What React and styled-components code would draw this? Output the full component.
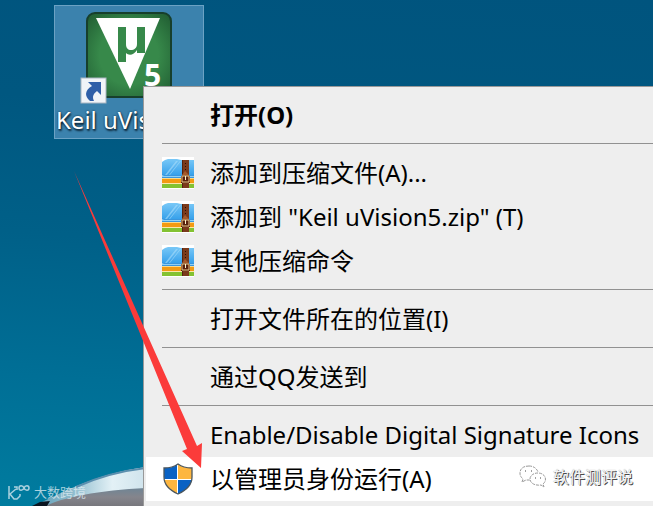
import React from "react";
import styled, { createGlobalStyle } from "styled-components";

const theme = {
  menuBg: "#eeeeee",
  menuBorder: "#999999",
  line: "#919191",
  arrow: "#fb3b3a",
};

const GlobalStyle = createGlobalStyle`
  * {
    box-sizing: border-box;
  }

  body {
    margin: 0;
    font-family: "Noto Sans", "Noto Sans CJK SC", sans-serif;
  }
`;

const Desktop = styled.main`
  position: relative;
  min-height: 100vh;
  overflow: hidden;
  background: linear-gradient(184deg, #00547e 0%, #005780 25%, #006088 50%, #006f96 76%, #007c9f 100%);
`;

const Wallpaper = styled.svg`
  position: absolute;
  left: 0;
  bottom: 0;
  width: 146px;
  height: 46px;
`;

const Shortcut = styled.button`
  position: absolute;
  left: 54px;
  top: 5px;
  width: 150px;
  padding: 6px 1px 2px;
  display: flex;
  flex-direction: column;
  align-items: center;
  border: 1px solid #6ba2c4;
  background-color: #3b82ad;
  font-family: inherit;

  svg {
    width: 98px;
    height: 92px;
  }
`;

const ShortcutName = styled.span`
  align-self: flex-start;
  font-size: 24px;
  line-height: 32px;
  white-space: nowrap;
  color: white;
  text-shadow: 1px 2px 2px #0b2436, 0 0 2px #0b2436;
`;

const Menu = styled.div`
  position: absolute;
  left: 143px;
  right: -4px;
  top: 86px;
  padding: 6px 2px;
  border: 1px solid ${theme.menuBorder};
  background-color: ${theme.menuBg};
`;

const MenuItem = styled.button`
  display: flex;
  align-items: center;
  gap: 16px;
  width: 100%;
  height: 44px;
  padding: 0 16px;
  border: none;
  background-color: ${({ $active }) => ($active ? "white" : "transparent")};
  color: black;
  font-family: inherit;
  font-size: 24px;
  font-weight: ${({ $bold }) => ($bold ? 700 : 400)};
  line-height: 32px;
  text-align: left;
  white-space: nowrap;
`;

const IconSlot = styled.span`
  flex: none;
  display: flex;
  width: 32px;
  height: 32px;
`;

const Separator = styled.hr`
  height: 1px;
  margin: 6px 0 7px 16px;
  border: none;
  background-color: ${theme.line};
`;

const Arrow = styled.svg`
  position: absolute;
  left: 72px;
  top: 168px;
  width: 134px;
  height: 302px;
  pointer-events: none;
`;

const AccountMark = styled.div`
  position: absolute;
  right: 20px;
  bottom: 17px;
  display: flex;
  align-items: center;
  gap: 6px;
  font-size: 16px;
  line-height: 24px;
  color: #f4f4f4;
  text-shadow: 1px 1px 0 #4a4a4a, 0 0 1px #999;
`;

const SiteMark = styled.div`
  position: absolute;
  left: 7px;
  bottom: 4px;
  display: flex;
  align-items: center;
  gap: 3px;
  font-size: 13px;
  line-height: 20px;
  color: rgba(225, 238, 244, 0.75);
`;

const KeilIcon = () => (
  <svg viewBox="0 0 98 92" aria-hidden="true">
    <defs>
      <radialGradient id="keil" cx="0.5" cy="0.5" r="0.7">
        <stop offset="0.5" stopColor="#37894a" />
        <stop offset="1" stopColor="#1f5a31" />
      </radialGradient>
    </defs>
    <rect x="7" y="1" width="84" height="84" rx="8" fill="url(#keil)" stroke="#173f2c" strokeWidth="2" />
    <path d="M16 6H80L50 77Z" fill="white" />
    <path d="M38 15h8v17c0 4 2 6 5 6s6-2 6-6V15h8v26h-8v-3c-3 5-8 6-11 3v9h-8z" fill="#37894a" />
    <text x="64" y="74" fill="white" fontSize="30" fontWeight="700" fontFamily="Open Sans">5</text>
    <rect x="1" y="66" width="25" height="25" fill="#f1f4f8" stroke="#aab6c2" />
    <path d="M8 70h13v13l-4-4c-4 3-5 6-3 10h-4c-6-5-5-11 2-15z" fill="#2f5fa8" />
  </svg>
);

const ArchiveIcon = () => (
  <svg viewBox="0 0 32 32" width="32" height="32" aria-hidden="true">
    <defs>
      <linearGradient id="folder" x1="0" y1="0" x2="0" y2="1">
        <stop offset="0" stopColor="#79c8f7" />
        <stop offset="1" stopColor="#2f9ce9" />
      </linearGradient>
    </defs>
    <path d="M0 0h32v32H0z" fill="white" />
    <path d="M0 26h32v5H0z" fill="#83c232" />
    <path d="M0 21h32v5H0z" fill="#f39a12" />
    <path d="M0 21h32v1H0z" fill="#fbd98a" />
    <path d="M0 26h32v1H0z" fill="#fbe6a8" />
    <path d="M0 5l3-2 3-1h9l4 1h13v17H2l-2-2z" fill="url(#folder)" />
    <path d="M0 17l2 1h30v3H0z" fill="#3a96dd" />
    <path d="M0 18l2 1h30v1H0z" fill="#8fd0f5" />
    <path d="M14 4h2L5 18H3zM18 4h1L8 18H7z" fill="#a9dcfa" opacity="0.6" />
    <path d="M20 3h7v28h-7z" fill="#7a3a1b" />
    <path d="M20 3h1v28h-1z" fill="#53230e" />
    <path d="M23 6h1v1h-1zM23 9h1v1h-1zM23 12h1v1h-1z" fill="#2a0f05" />
    <path d="M20 18l3-4 4 4z" fill="#a35a2c" />
    <path d="M19 19h9v7h-9z" fill="#57200c" />
    <path d="M20 19h7v6h-7z" fill="none" stroke="#e8c98a" />
    <path d="M23 19h1v4h-1z" fill="#fff3cc" />
  </svg>
);

const ShieldIcon = () => (
  <svg viewBox="0 0 32 32" width="32" height="32" aria-hidden="true">
    <clipPath id="shield">
      <path d="M2 5c6 0 10-1 14-4 4 3 8 4 14 4v9c0 8-5 13-14 17C7 27 2 22 2 14z" />
    </clipPath>
    <g clipPath="url(#shield)">
      <path d="M0 0h32v32H0z" fill="white" />
      <path d="M0 0h15v16H0zM16 17h16v15H16z" fill="#0a62c4" />
      <path d="M16 0h16v16H16zM0 17h15v15H0z" fill="#fdb640" />
    </g>
    <path
      d="M2 5c6 0 10-1 14-4 4 3 8 4 14 4v9c0 8-5 13-14 17C7 27 2 22 2 14z"
      fill="none"
      stroke="#4b565d"
      strokeWidth="1.300"
    />
  </svg>
);

const menuGroups = [
  [{ label: "打开(O)", bold: true }],
  [
    { label: "添加到压缩文件(A)...", Icon: ArchiveIcon },
    { label: '添加到 "Keil uVision5.zip" (T)', Icon: ArchiveIcon },
    { label: "其他压缩命令", Icon: ArchiveIcon },
  ],
  [{ label: "打开文件所在的位置(I)" }],
  [{ label: "通过QQ发送到" }],
  [
    { label: "Enable/Disable Digital Signature Icons" },
    { label: "以管理员身份运行(A)", Icon: ShieldIcon, active: true },
  ],
];

const App = () => {
  return (
    <>
      <GlobalStyle />
      <Desktop>
        <Wallpaper viewBox="0 0 146 46" aria-hidden="true">
          <defs>
            <linearGradient id="chrome" x1="0" y1="0" x2="1" y2="0">
              <stop offset="0" stopColor="#5f9fb8" />
              <stop offset="0.35" stopColor="#8fbccd" />
              <stop offset="0.7" stopColor="#e3f1f6" />
              <stop offset="1" stopColor="#cfe3ec" />
            </linearGradient>
            <linearGradient id="body" x1="0" y1="0" x2="0" y2="1">
              <stop offset="0" stopColor="#6f8595" />
              <stop offset="0.5" stopColor="#85858c" />
              <stop offset="1" stopColor="#77777d" />
            </linearGradient>
          </defs>
          <path d="M34 46C66 30 100 13 146 7V46z" fill="url(#chrome)" />
          <path d="M76 27C98 17 120 11 146 8" fill="none" stroke="#5b8fae" strokeWidth="2" />
          <path d="M46 46C60 38 100 30 146 28V46z" fill="url(#body)" />
          <path d="M32 46l8-4 10-1-3 5z" fill="#0b1520" />
        </Wallpaper>

        <Shortcut type="button">
          <KeilIcon />
          <ShortcutName>Keil uVision5</ShortcutName>
        </Shortcut>

        <Menu role="menu">
          {menuGroups.map((group, index) => (
            <React.Fragment key={group[0].label}>
              {index > 0 && <Separator />}
              {group.map(({ label, Icon, bold, active }) => (
                <MenuItem key={label} type="button" role="menuitem" $bold={bold} $active={active}>
                  <IconSlot>{Icon && <Icon />}</IconSlot>
                  {label}
                </MenuItem>
              ))}
            </React.Fragment>
          ))}
        </Menu>

        {/* Red pointer to the last entry */}
        <Arrow viewBox="0 0 134 302" aria-hidden="true">
          <path d="M2 3L125 278 130 275 129 300 110 283 115 281z" fill={theme.arrow} />
        </Arrow>

        <AccountMark>
          <svg width="28" height="24" viewBox="0 0 28 24" fill="white" stroke="#999" strokeWidth="1" strokeDasharray="3 1" aria-hidden="true">
            <path d="M10 1C4 1 1 4 1 8c0 3 1 4 3 6l-1 3 4-2 5 0M10 1c5 0 8 3 9 6" />
            <path d="M19 8c-5 0-8 3-8 6 0 4 5 7 11 6l3 2-1-3c5-4 2-11-5-11z" />
            <path d="M6 6h1M12 6h1M16 13h1M21 13h1" stroke="#444" />
          </svg>
          软件测评说
        </AccountMark>

        <SiteMark>
          <svg width="24" height="16" viewBox="0 0 24 16" fill="none" stroke="currentColor" strokeWidth="1.500" aria-hidden="true">
            <path d="M2 2v13M9 5L3 10l4 5h3l3-3v-2M7 3h3v3" />
            <path d="M17 4c-1-3-5-3-5 0s4 3 5 0 5-3 5 0-4 3-5 0z" />
          </svg>
          大数跨境
        </SiteMark>
      </Desktop>
    </>
  );
};

export default App;
